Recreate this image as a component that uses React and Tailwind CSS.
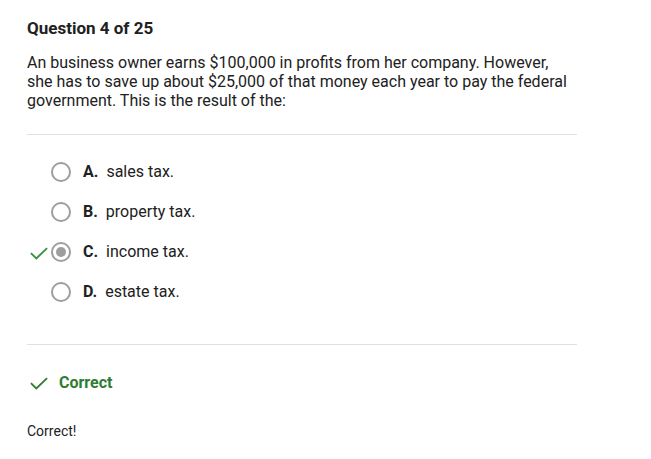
import React from 'react';

const options = [
  { letter: 'A.', text: 'sales tax.' },
  { letter: 'B.', text: 'property tax.' },
  { letter: 'C.', text: 'income tax.', selected: true },
  { letter: 'D.', text: 'estate tax.' },
];

const Check = ({ className }) => (
  <svg viewBox="0 0 20 14" className={className} fill="none" stroke="currentColor" strokeWidth="2">
    <path d="M1 6.5 L7 12.5 L19 1" />
  </svg>
);

const Radio = ({ selected }) => (
  <span className="w-[20px] h-[20px] rounded-full border-2 border-[#9e9e9e] flex items-center justify-center bg-white">
    {selected && <span className="w-[10px] h-[10px] rounded-full bg-[#9e9e9e]" />}
  </span>
);

export default function App() {
  return (
    <div className="min-h-screen bg-white text-[#212121] px-[27px] pt-[17px]" style={{ fontFamily: 'Roboto, "Liberation Sans", sans-serif' }}>
      <h2 className="text-[17px] leading-[22px] font-bold text-[#212121]">Question 4 of 25</h2>
      <p className="mt-[14px] w-[550px] text-[16px] leading-[19px]">
        An business owner earns $100,000 in profits from her company. However, she has to save up about $25,000 of that money each year to pay the federal government. This is the result of the:
      </p>

      <div className="w-[550px] border-t border-[#e0e0e0] mt-[24px]" />

      <div className="flex flex-col pt-[17px]">
        {options.map((o) => (
          <div key={o.letter} className="flex items-center h-[40px]">
            <span className="w-[24px] flex items-center">
              {o.selected && <Check className="w-[18px] h-[13px] text-[#388e3c] mt-[3px] ml-[3px]" />}
            </span>
            <Radio selected={o.selected} />
            <span className="ml-[12px] text-[16px] font-bold">{o.letter}</span>
            <span className="ml-[8px] text-[16px]">{o.text}</span>
          </div>
        ))}
      </div>

      <div className="w-[550px] border-t border-[#e0e0e0] mt-[32px]" />

      <div className="flex items-center mt-[28px] h-[20px]">
        <Check className="w-[18px] h-[13px] text-[#2e7d32] ml-[3px]" />
        <span className="ml-[11px] text-[16px] font-bold text-[#2e7d32]">Correct</span>
      </div>

      <p className="mt-[29px] text-[14px] leading-[18px]">Correct!</p>
    </div>
  );
}
